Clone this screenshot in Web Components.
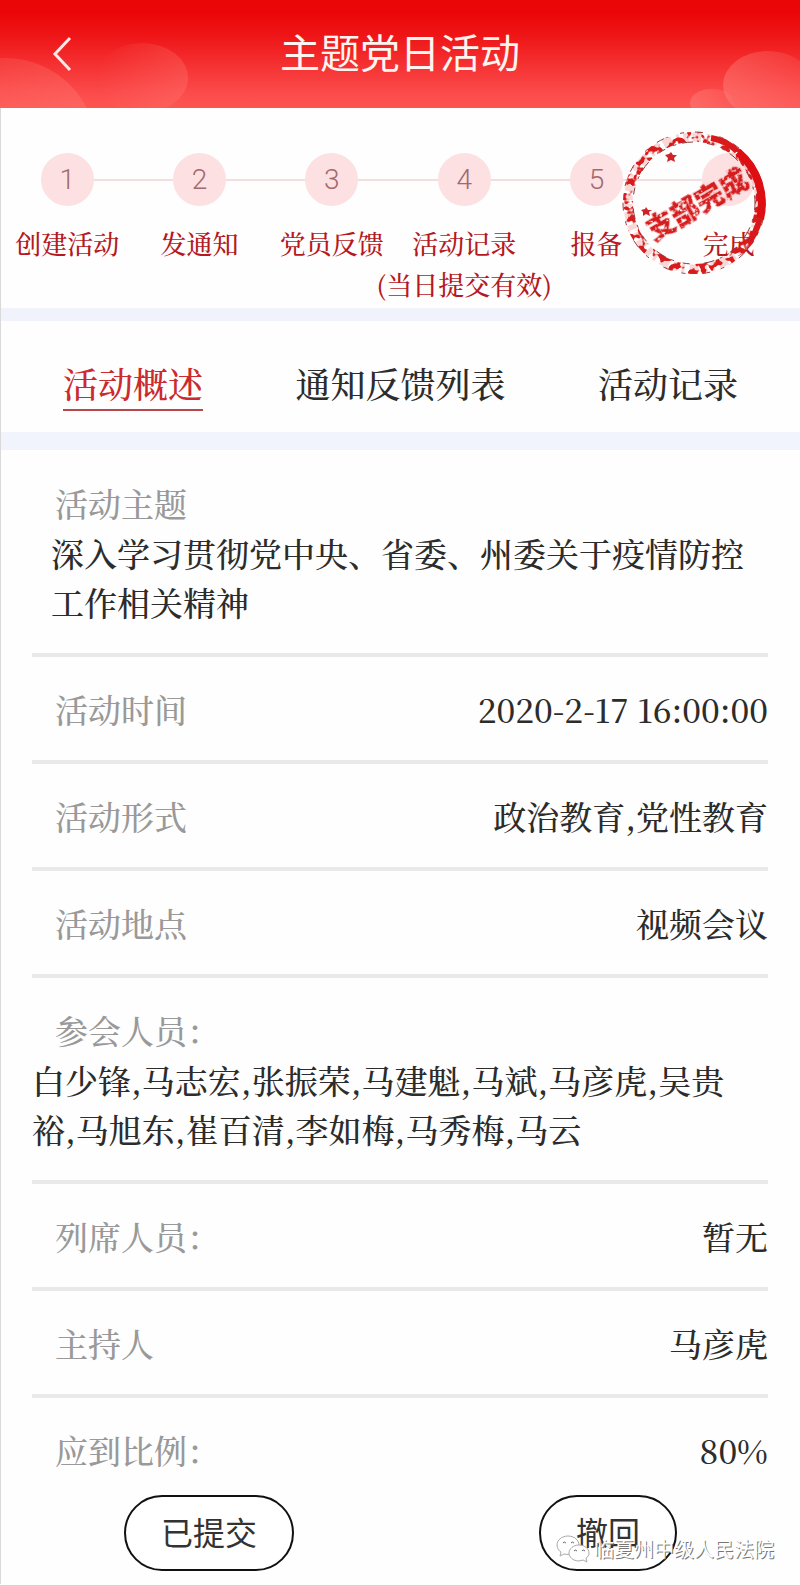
<!DOCTYPE html>
<html lang="zh-CN">
<head>
<meta charset="UTF-8">
<meta name="viewport" content="width=device-width, initial-scale=1">
<title>主题党日活动</title>
<style>
body{
  margin: 0;
  background-color: #fefefe;
  color: #2c2c2c;
  font-family: "Noto Serif CJK SC", "Liberation Serif", "Noto Sans CJK SC", serif;
}

main{
  border-left: 1px solid #d9d9d9;
}
</style>
</head>
<body>
<app-header>主题党日活动</app-header>
<main>
  <step-bar>
    <step-item num="1" first>创建活动</step-item>
    <step-item num="2">发通知</step-item>
    <step-item num="3">党员反馈</step-item>
    <step-item num="4">活动记录<br>(当日提交有效)</step-item>
    <step-item num="5">报备</step-item>
    <step-item last>完成</step-item>
    <done-stamp slot="stamp" text="支部完成"></done-stamp>
  </step-bar>
  <tab-bar>
    <tab-item active>活动概述</tab-item>
    <tab-item>通知反馈列表</tab-item>
    <tab-item>活动记录</tab-item>
  </tab-bar>
  <detail-list>
    <detail-row label="活动主题" block indent>深入学习贯彻党中央、省委、州委关于疫情防控工作相关精神</detail-row>
    <detail-row label="活动时间">2020-2-17 16:00:00</detail-row>
    <detail-row label="活动形式">政治教育,党性教育</detail-row>
    <detail-row label="活动地点">视频会议</detail-row>
    <detail-row label="参会人员：" block>白少锋,马志宏,张振荣,马建魁,马斌,马彦虎,吴贵裕,马旭东,崔百清,李如梅,马秀梅,马云</detail-row>
    <detail-row label="列席人员：">暂无</detail-row>
    <detail-row label="主持人">马彦虎</detail-row>
    <detail-row label="应到比例：" last>80%</detail-row>
  </detail-list>
  <action-bar>
    <pill-button>已提交</pill-button>
    <pill-button>撤回</pill-button>
    <account-mark slot="mark">临夏州中级人民法院</account-mark>
  </action-bar>
</main>

<script>
class AppHeader extends HTMLElement {
  constructor() {
    super();
    this.attachShadow({ mode: "open" }).innerHTML = `
      <style>
:host{
  display: block;
}

header{
  position: relative;
  display: grid;
  grid-template-columns: 1fr auto 1fr;
  align-items: center;
  height: 108px;
  overflow: hidden;
  background: linear-gradient(#ea0507 10%, #ee1416 32%, #fb4a4a 85%, #fc5552);
}

.bubbles{
  position: absolute;
  inset: 0;
  width: 100%;
  height: 100%;
}

button{
  position: relative;
  justify-self: start;
  margin-left: 48px;
  padding: 0;
  border: 0;
  background: none;
  line-height: 0;
  cursor: pointer;
}

h1{
  position: relative;
  margin: 0;
  color: #fff4f0;
  font: 400 40px/60px "Noto Sans CJK SC", sans-serif;
  padding-bottom: 6px;
}
      </style>
      <header>
        <svg class="bubbles" viewBox="0 0 800 108" preserveAspectRatio="none" aria-hidden="true">
          <defs>
            <linearGradient id="a" x1="0" x2="1"><stop offset="0" stop-color="#ff8a80" stop-opacity=".08"/><stop offset="1" stop-color="#ff8a80" stop-opacity=".3"/></linearGradient>
            <linearGradient id="b" x1="0" x2="1"><stop offset=".05" stop-color="#ff8078" stop-opacity="0"/><stop offset="1" stop-color="#ff8078" stop-opacity=".3"/></linearGradient>
            <linearGradient id="c" x1="0" x2="1"><stop offset="0" stop-color="#ff9088" stop-opacity=".38"/><stop offset="1" stop-color="#ff9088" stop-opacity=".1"/></linearGradient>
          </defs>
          <circle cx="5" cy="150" r="92" fill="url(#a)"/>
          <ellipse cx="142" cy="78" rx="46" ry="35" fill="url(#b)"/>
          <ellipse cx="712" cy="103" rx="22" ry="14" fill="url(#c)"/>
          <ellipse cx="768" cy="85" rx="45" ry="34" fill="url(#c)"/>
        </svg>
        <button type="button" aria-label="返回">
          <svg width="28" height="36" viewBox="0 0 28 36" fill="none" stroke="#ffe9e6" stroke-width="3"><path d="M22 2 7 18l15 16"/></svg>
        </button>
        <h1><slot></slot></h1>
      </header>
    `;
  }
}

class StepBar extends HTMLElement {
  constructor() {
    super();
    this.attachShadow({ mode: "open" }).innerHTML = `
      <style>
:host{
  display: block;
  position: relative;
  padding: 45px 5px 4px 0;
  border-bottom: 13px solid #f0f3fc;
}

.steps{
  display: grid;
  grid-template-columns: repeat(6, minmax(0, 1fr));
}

/* the stamp is pressed over the last step */
.stamp{
  position: absolute;
  top: 23px;
  right: 34px;
}
      </style>
      <div class="steps"><slot></slot></div>
      <div class="stamp"><slot name="stamp"></slot></div>
    `;
  }
}

class StepItem extends HTMLElement {
  constructor() {
    super();
    this.attachShadow({ mode: "open" }).innerHTML = `
      <style>
:host{
  display: flex;
  flex-direction: column;
  align-items: center;
}

.track{
  display: flex;
  align-items: center;
  align-self: stretch;
}

.line{
  flex: 1;
  height: 2px;
  background-color: #efdfdf;
}

:host([first]) .line:first-child,:host([last]) .line:last-child{
  background: none;
}

.num{
  width: 53px;
  height: 53px;
  border-radius: 50%;
  background-color: #fde0e1;
  color: #a3696f;
  font: 300 28px/53px Roboto, sans-serif;
  text-align: center;
}

.label{
  margin-top: 16px;
  color: #b5191f;
  font-size: 26px;
  font-weight: 500;
  line-height: 41px;
  text-align: center;
  white-space: nowrap;
}
      </style>
      <div class="track">
        <span class="line"></span>
        <span class="num">${this.getAttribute("num") || ""}</span>
        <span class="line"></span>
      </div>
      <div class="label"><slot></slot></div>
    `;
  }
}

class DoneStamp extends HTMLElement {
  constructor() {
    super();
    this.attachShadow({ mode: "open" }).innerHTML = `
      <style>
:host{
  display: block;
}

svg{
  display: block;
}

text{
  font: 900 28px "Noto Sans CJK SC", sans-serif;
}
      </style>
      <svg width="144" height="144" viewBox="0 0 144 144">
        <defs>
          <filter id="worn" x="-10%" y="-10%" width="120%" height="120%">
            <feTurbulence type="fractalNoise" baseFrequency=".13" numOctaves="2" seed="8"/>
            <feColorMatrix values="0 0 0 0 0  0 0 0 0 0  0 0 0 0 0  12 0 0 0 -6"/>
            <feComposite in="SourceGraphic" operator="in"/>
          </filter>
          <filter id="ink" x="-10%" y="-30%" width="120%" height="160%">
            <feTurbulence type="fractalNoise" baseFrequency=".3" numOctaves="2" seed="3"/>
            <feColorMatrix values="0 0 0 0 0  0 0 0 0 0  0 0 0 0 0  6 0 0 0 -1.6"/>
            <feComposite in="SourceGraphic" operator="in"/>
          </filter>
        </defs>
        <g fill="none">
          <circle cx="72" cy="72" r="66" stroke="#f6a9a9" stroke-width="9" stroke-dasharray="5 4 9 5 3 4" opacity=".45"/>
          <g filter="url(#worn)">
            <circle cx="72" cy="72" r="66" stroke="#d81a1c" stroke-width="10"/>
          </g>
          <circle cx="72" cy="72" r="61" stroke="#8c3a3c" stroke-width="1" stroke-dasharray="7 9 3 6 11 14"/>
          <circle cx="72" cy="72" r="71" stroke="#a03c3e" stroke-width="1" stroke-dasharray="4 11 8 17"/>
          <path d="M116 21A67 67 0 0 1 138 88" stroke="#dd0f12" stroke-width="8"/>
          <path d="M89 7Q103 9 115 20M138 87Q134 103 126 112" stroke="#d81a1c" stroke-width="6"/>
        </g>
        <g fill="#cf2427">
          <path d="m49 21 2 3 4 0-3 3 1 4-4-2-4 2 1-4-3-3 4-1z"/>
          <path d="m24 76 2 3 4 0-3 2 1 4-4-2-3 2 0-4-2-2 4-1z"/>
        </g>
        <g transform="rotate(-30 75 73)">
          <text x="75" y="84" text-anchor="middle" fill="#d51a1e" stroke="#f3a0a0" stroke-width="1" paint-order="stroke" filter="url(#ink)">${this.getAttribute("text")}</text>
        </g>
      </svg>
    `;
  }
}

class TabBar extends HTMLElement {
  constructor() {
    super();
    this.attachShadow({ mode: "open" }).innerHTML = `
      <style>
:host{
  display: block;
  border-bottom: 18px solid #f1f3fd;
}

nav{
  display: flex;
  justify-content: space-between;
  padding: 36px 62px 21px 62px;
}
      </style>
      <nav><slot></slot></nav>
    `;
  }
}

class TabItem extends HTMLElement {
  constructor() {
    super();
    this.attachShadow({ mode: "open" }).innerHTML = `
      <style>
:host{
  display: block;
}

button{
  display: block;
  padding: 0;
  border: 0;
  border-bottom: 2px solid transparent;
  background: none;
  color: #2c2c2c;
  font: inherit;
  font-size: 35px;
  font-weight: 500;
  line-height: 52px;
  cursor: pointer;
}

:host([active]) button{
  color: #cb2a2e;
  border-bottom-color: #b8484c;
}
      </style>
      <button type="button"><slot></slot></button>
    `;
  }
}

class DetailList extends HTMLElement {
  constructor() {
    super();
    this.attachShadow({ mode: "open" }).innerHTML = `
      <style>
:host{
  display: flex;
  flex-direction: column;
  padding: 1px 32px 0 31px;
}
      </style>
      <slot></slot>
    `;
  }
}

class DetailRow extends HTMLElement {
  constructor() {
    super();
    this.attachShadow({ mode: "open" }).innerHTML = `
      <style>
:host{
  display: flex;
  justify-content: space-between;
  padding: 27px 0;
  border-bottom: 4px solid #e9e9e9;
  font-size: 33px;
  line-height: 49px;
}

:host([block]){
  display: block;
}

:host([last]){
  padding-bottom: 0;
  border-bottom: 0;
}

.label{
  padding-left: 23px;
  color: #999;
  font-weight: 500;
}

.value{
  font-weight: 500;
  font-variant-numeric: tabular-nums;
}

:host([block]) .label{
  line-height: 50px;
}

:host([indent]) .value{
  padding: 0 16px 0 19px;
}

:host([block]:not([indent])) .value{
  padding-right: 32px;
}
      </style>
      <div class="label">${this.getAttribute("label")}</div>
      <div class="value"><slot></slot></div>
    `;
  }
}

class ActionBar extends HTMLElement {
  constructor() {
    super();
    this.attachShadow({ mode: "open" }).innerHTML = `
      <style>
:host{
  display: flex;
  justify-content: space-between;
  position: relative;
  padding: 21px 123px 13px;
}

/* account mark lies over the second button */
.mark{
  position: absolute;
  right: 26px;
  bottom: 20px;
}
      </style>
      <slot></slot>
      <div class="mark"><slot name="mark"></slot></div>
    `;
  }
}

class PillButton extends HTMLElement {
  constructor() {
    super();
    this.attachShadow({ mode: "open" }).innerHTML = `
      <style>
:host{
  display: block;
}

button{
  display: block;
  height: 76px;
  padding: 0 35px 4px;
  border: 2px solid #111;
  border-radius: 38px;
  background-color: #fff;
  color: #333;
  font: 400 32px "Noto Sans CJK SC", sans-serif;
  cursor: pointer;
}
      </style>
      <button type="button"><slot></slot></button>
    `;
  }
}

class AccountMark extends HTMLElement {
  constructor() {
    super();
    this.attachShadow({ mode: "open" }).innerHTML = `
      <style>
:host{
  display: flex;
  align-items: center;
  gap: 4px;
  color: #fff;
  font: 400 20px/30px "Noto Sans CJK SC", sans-serif;
  text-shadow: 1px 1px 0 #777;
}
      </style>
      <svg width="34" height="30" viewBox="0 0 34 30" fill="#fff" stroke="#aaa" stroke-width="1" aria-hidden="true">
        <path d="M12 2C6 2 1 6 1 11c0 3 2 6 4 7l-1 4 4-2c8 2 15-3 15-9C23 6 18 2 12 2z"/>
        <path d="M23 11c-6 0-10 4-10 8s4 8 10 8l4-1 4 2-1-4c2-1 3-3 3-5 0-4-4-8-10-8z"/>
        <path d="M7 9q1-2 3 0M15 9q1-2 3 0M18 17q1-2 3 0M26 17q1-2 3 0" fill="none" stroke="#666"/>
      </svg>
      <span><slot></slot></span>
    `;
  }
}

customElements.define("app-header", AppHeader);
customElements.define("step-bar", StepBar);
customElements.define("step-item", StepItem);
customElements.define("done-stamp", DoneStamp);
customElements.define("tab-bar", TabBar);
customElements.define("tab-item", TabItem);
customElements.define("detail-list", DetailList);
customElements.define("detail-row", DetailRow);
customElements.define("action-bar", ActionBar);
customElements.define("pill-button", PillButton);
customElements.define("account-mark", AccountMark);
</script>
</body>
</html>
